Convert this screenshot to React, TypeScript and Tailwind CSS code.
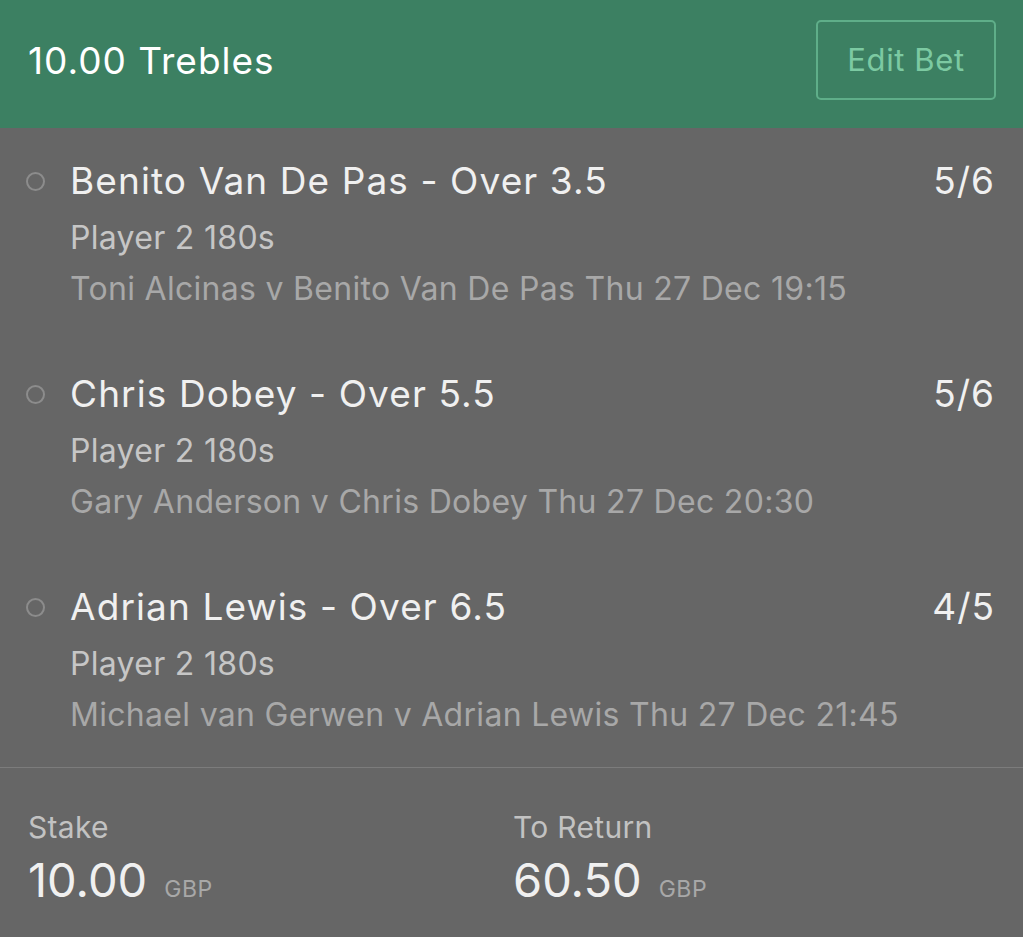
const legs = [
  {
    title: "Benito Van De Pas - Over 3.5",
    odds: "5/6",
    market: "Player 2 180s",
    event: "Toni Alcinas v Benito Van De Pas Thu 27 Dec 19:15",
  },
  {
    title: "Chris Dobey - Over 5.5",
    odds: "5/6",
    market: "Player 2 180s",
    event: "Gary Anderson v Chris Dobey Thu 27 Dec 20:30",
  },
  {
    title: "Adrian Lewis - Over 6.5",
    odds: "4/5",
    market: "Player 2 180s",
    event: "Michael van Gerwen v Adrian Lewis Thu 27 Dec 21:45",
  },
];

function Amount({ label, value }: { label: string; value: string }) {
  return (
    <div>
      <div className="text-[30px] leading-[36px] text-[#c2c2c2] tracking-[0.3px]">{label}</div>
      <div className="flex items-baseline gap-[17px] mt-[7px]">
        <span className="text-[47px] leading-[56px] text-[#f0f0f0]">{value}</span>
        <span className="text-[23px] text-[#a8a8a8] tracking-[0.5px]">GBP</span>
      </div>
    </div>
  );
}

export default function App() {
  return (
    <div
      className="w-[1023px] h-[937px] bg-[#666666] overflow-hidden"
      style={{ fontFamily: "Inter, 'Noto Sans', sans-serif" }}
    >
      {/* Header */}
      <div className="h-[128px] bg-[#3c8062] flex items-center justify-between pl-[28px] pr-[27px]">
        <h1 className="text-[37px] leading-[44px] mb-[6px] text-white tracking-[1px]">10.00 Trebles</h1>
        <button className="w-[180px] h-[80px] mb-[8px] border-2 border-[#5fae89] rounded-[5px] text-[#7ccaa2] text-[31px] tracking-[0.6px]">
          Edit Bet
        </button>
      </div>

      {/* Selections */}
      <div className="pt-[27px] pb-[27px] flex flex-col gap-[54px]">
        {legs.map((leg) => (
          <div key={leg.title} className="flex pr-[28px]">
            <div className="w-[70px] flex justify-center pt-[17px] pl-[1px]">
              <span className="block w-[19px] h-[19px] rounded-full border-2 border-[#8c8c8c]" />
            </div>
            <div className="flex-1">
              <div className="flex justify-between items-start">
                <div className="text-[37px] leading-[52px] text-[#f0f0f0] tracking-[1.1px]">{leg.title}</div>
                <div className="text-[37px] leading-[52px] text-[#f0f0f0] tracking-[1px]">{leg.odds}</div>
              </div>
              <div className="text-[32px] leading-[52px] mt-[5px] text-[#c6c6c6] tracking-[0.3px]">{leg.market}</div>
              <div className="text-[32px] leading-[50px] text-[#a8a8a8] tracking-[0.3px]">{leg.event}</div>
            </div>
          </div>
        ))}
      </div>

      {/* Totals */}
      <div className="border-t border-[#7c7c7c] flex pl-[28px] pt-[41px]">
        <div className="w-[485px]">
          <Amount label="Stake" value="10.00" />
        </div>
        <Amount label="To Return" value="60.50" />
      </div>
    </div>
  );
}
